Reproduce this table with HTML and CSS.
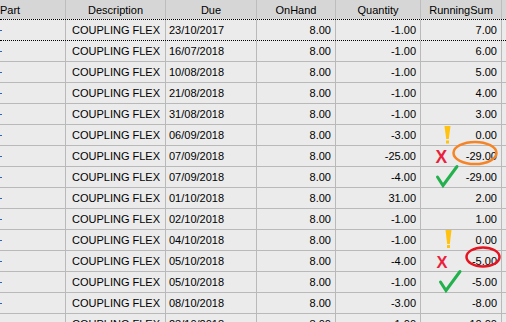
FILE: index.html
```html
<!DOCTYPE html>
<html>
<head>
<meta charset="utf-8">
<link rel="stylesheet" href="styles.css">
</head>
<body>
<div class="view">
  <div class="grid">
    <div class="row head">
      <div class="c part">Part</div>
      <div class="c desc ctr">Description</div>
      <div class="c due ctr">Due</div>
      <div class="c onh ctr">OnHand</div>
      <div class="c qty ctr">Quantity</div>
      <div class="c sum ctr">RunningSum</div>
      <div class="c fill"></div>
    </div>
    <div class="row focus"><div class="c part"><span class="tick"></span></div><div class="c desc">COUPLING FLEX</div><div class="c due">23/10/2017</div><div class="c onh num">8.00</div><div class="c qty num">-1.00</div><div class="c sum num">7.00</div><div class="c fill"></div></div>
    <div class="row"><div class="c part"><span class="tick"></span></div><div class="c desc">COUPLING FLEX</div><div class="c due">16/07/2018</div><div class="c onh num">8.00</div><div class="c qty num">-1.00</div><div class="c sum num">6.00</div><div class="c fill"></div></div>
    <div class="row"><div class="c part"><span class="tick"></span></div><div class="c desc">COUPLING FLEX</div><div class="c due">10/08/2018</div><div class="c onh num">8.00</div><div class="c qty num">-1.00</div><div class="c sum num">5.00</div><div class="c fill"></div></div>
    <div class="row"><div class="c part"><span class="tick"></span></div><div class="c desc">COUPLING FLEX</div><div class="c due">21/08/2018</div><div class="c onh num">8.00</div><div class="c qty num">-1.00</div><div class="c sum num">4.00</div><div class="c fill"></div></div>
    <div class="row"><div class="c part"><span class="tick"></span></div><div class="c desc">COUPLING FLEX</div><div class="c due">31/08/2018</div><div class="c onh num">8.00</div><div class="c qty num">-1.00</div><div class="c sum num">3.00</div><div class="c fill"></div></div>
    <div class="row"><div class="c part"><span class="tick"></span></div><div class="c desc">COUPLING FLEX</div><div class="c due">06/09/2018</div><div class="c onh num">8.00</div><div class="c qty num">-3.00</div><div class="c sum num">0.00</div><div class="c fill"></div></div>
    <div class="row"><div class="c part"><span class="tick"></span></div><div class="c desc">COUPLING FLEX</div><div class="c due">07/09/2018</div><div class="c onh num">8.00</div><div class="c qty num">-25.00</div><div class="c sum num">-29.00</div><div class="c fill"></div></div>
    <div class="row"><div class="c part"><span class="tick"></span></div><div class="c desc">COUPLING FLEX</div><div class="c due">07/09/2018</div><div class="c onh num">8.00</div><div class="c qty num">-4.00</div><div class="c sum num">-29.00</div><div class="c fill"></div></div>
    <div class="row"><div class="c part"><span class="tick"></span></div><div class="c desc">COUPLING FLEX</div><div class="c due">01/10/2018</div><div class="c onh num">8.00</div><div class="c qty num">31.00</div><div class="c sum num">2.00</div><div class="c fill"></div></div>
    <div class="row"><div class="c part"><span class="tick"></span></div><div class="c desc">COUPLING FLEX</div><div class="c due">02/10/2018</div><div class="c onh num">8.00</div><div class="c qty num">-1.00</div><div class="c sum num">1.00</div><div class="c fill"></div></div>
    <div class="row"><div class="c part"><span class="tick"></span></div><div class="c desc">COUPLING FLEX</div><div class="c due">04/10/2018</div><div class="c onh num">8.00</div><div class="c qty num">-1.00</div><div class="c sum num">0.00</div><div class="c fill"></div></div>
    <div class="row"><div class="c part"><span class="tick"></span></div><div class="c desc">COUPLING FLEX</div><div class="c due">05/10/2018</div><div class="c onh num">8.00</div><div class="c qty num">-4.00</div><div class="c sum num">-5.00</div><div class="c fill"></div></div>
    <div class="row"><div class="c part"><span class="tick"></span></div><div class="c desc">COUPLING FLEX</div><div class="c due">05/10/2018</div><div class="c onh num">8.00</div><div class="c qty num">-1.00</div><div class="c sum num">-5.00</div><div class="c fill"></div></div>
    <div class="row"><div class="c part"><span class="tick"></span></div><div class="c desc">COUPLING FLEX</div><div class="c due">08/10/2018</div><div class="c onh num">8.00</div><div class="c qty num">-3.00</div><div class="c sum num">-8.00</div><div class="c fill"></div></div>
    <div class="row"><div class="c part"><span class="tick"></span></div><div class="c desc">COUPLING FLEX</div><div class="c due">23/10/2018</div><div class="c onh num">8.00</div><div class="c qty num">-1.00</div><div class="c sum num">-10.00</div><div class="c fill"></div></div>
  </div>
  <svg class="marks" width="506" height="322" viewBox="0 0 506 322" xmlns="http://www.w3.org/2000/svg">
    <!-- group 1 -->
    <polygon points="444.5,126 450.5,126 448.8,139 446.2,139" fill="#ffc20e"/>
    <rect x="446" y="140.5" width="3" height="3" fill="#ffc20e"/>
    <text x="435.5" y="163" font-family="Liberation Sans, Arial, sans-serif" font-weight="bold" font-size="17.5" fill="#ea1f3d">X</text>
    <ellipse cx="475" cy="153" rx="21.5" ry="11" fill="none" stroke="#f58426" stroke-width="2.5"/>
    <path d="M437.5 177 L443 185.5 L457 166.5" fill="none" stroke="#22b14c" stroke-width="3" stroke-linecap="round" stroke-linejoin="miter"/>
    <!-- group 2 -->
    <polygon points="445.5,230 451.5,230 449.8,244 447.2,244" fill="#ffc20e"/>
    <rect x="447" y="245" width="3" height="3" fill="#ffc20e"/>
    <text x="436.5" y="268" font-family="Liberation Sans, Arial, sans-serif" font-weight="bold" font-size="16.5" fill="#ea1f3d">X</text>
    <ellipse cx="483" cy="257" rx="16.5" ry="9.5" fill="none" stroke="#e5141f" stroke-width="2.5"/>
    <path d="M440.5 282 L446 290.5 L460 271.5" fill="none" stroke="#22b14c" stroke-width="3" stroke-linecap="round" stroke-linejoin="miter"/>
  </svg>
</div>
</body>
</html>
```
FILE: styles.css
```css
html, body {
  margin: 0;
  padding: 0;
  background: #ebebeb;
  overflow: hidden;
}
.view {
  position: relative;
  width: 506px;
  height: 322px;
  overflow: hidden;
  font-family: "Liberation Sans", Arial, sans-serif;
  font-size: 11px;
  color: #000;
}
.grid {
  display: flex;
  flex-direction: column;
}
.row {
  display: flex;
  height: 21px;
  box-sizing: border-box;
  border-bottom: 1px solid #b9b9b9;
  background: #ebebeb;
  flex: none;
}
.row.head {
  height: 19px;
  border-bottom: none;
  background: #d6d6d6;
}
.row.focus {
  height: 22px;
  border-top: 1px dotted #000;
  border-bottom: 1px dotted #000;
}
.c {
  box-sizing: border-box;
  border-right: 1px solid #b9b9b9;
  line-height: 15px;
  padding-top: 3px;
  white-space: nowrap;
  overflow: hidden;
  flex: none;
}
.head .c {
  padding-top: 3px;
  border-right-color: #bdbdbd;
}
.part { width: 66px; }
.desc { width: 100px; padding-left: 6px; }
.due { width: 91px; padding-left: 3px; }
.onh { width: 79px; }
.qty { width: 85px; }
.sum { width: 81px; }
.fill { flex: 1; border-right: none; }
.ctr { text-align: center; padding-left: 0; }
.head .part { padding-left: 0; }
.num { text-align: right; padding-right: 4px; }
.tick {
  display: inline-block;
  width: 2px;
  height: 1px;
  background: #2a64c8;
  vertical-align: 3px;
}
.marks {
  position: absolute;
  left: 0;
  top: 0;
  pointer-events: none;
}
```
